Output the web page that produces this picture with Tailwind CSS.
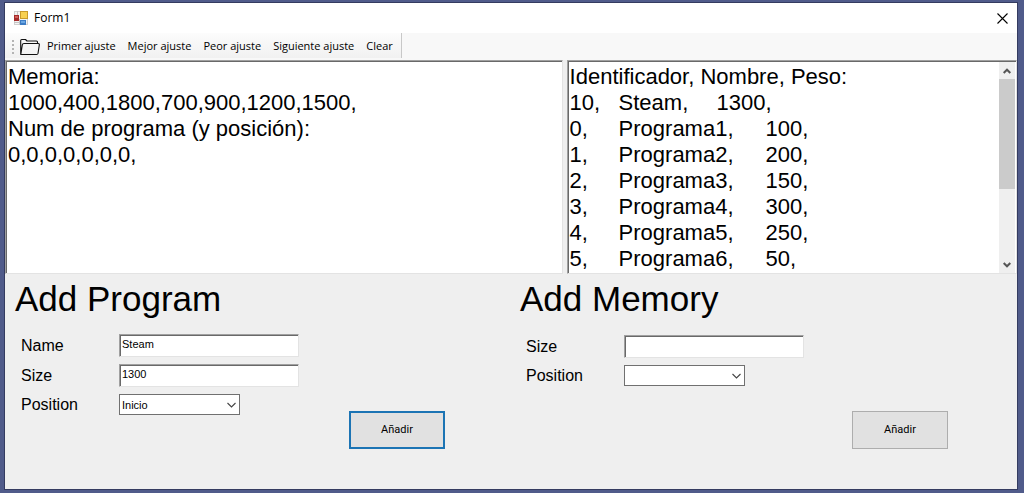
<!DOCTYPE html>
<html lang="es">
<head>
<meta charset="utf-8">
<meta name="viewport" content="width=device-width, initial-scale=1">
<title>Form1</title>
<script src="https://cdn.jsdelivr.net/npm/@tailwindcss/browser@4"></script>
</head>
<body class="flex min-h-screen bg-[#505b8a] pt-[2px] pr-[6px] pb-[3px] pl-[4px] font-['Liberation_Sans',Arial,sans-serif] text-black">
<main class="flex grow flex-col border border-[#343b60] bg-[#efefef]">
  <header class="flex h-[30px] items-center bg-white pr-[9px] pl-[9px] font-['Open_Sans',sans-serif] text-[12px]">
    <svg class="h-[14px] w-[14px]" viewBox="0 0 14 14" aria-hidden="true">
      <rect x="0.5" y="0.5" width="13" height="13" fill="#f4f4f4" stroke="#d0d0d0"/>
      <path d="M5.5 8v6M0 11.500h5M3.500 0v4" stroke="#c4c4c4"/>
      <rect x="6" y="0" width="8" height="8" fill="#c99a2a"/>
      <rect x="7" y="1" width="6" height="6" fill="#f8d050"/>
      <rect x="0" y="4" width="5" height="6" fill="#a52a2a"/>
      <rect x="1" y="5" width="3" height="2" fill="#d0605a"/>
      <rect x="6" y="9" width="6" height="5" fill="#3c7cc4"/>
      <rect x="7" y="10" width="4" height="2" fill="#6aa6e2"/>
    </svg>
    <h1 class="ml-[6px] grow">Form1</h1>
    <button type="button" aria-label="Close">
      <svg class="h-[11px] w-[11px]" viewBox="0 0 11 11" fill="none" stroke="#000" stroke-width="1.1"><path d="M.5.5l10 10M10.5.5l-10 10"/></svg>
    </button>
  </header>

  <nav class="flex h-[27px] items-start bg-[#f8f8f8] font-['Open_Sans',sans-serif] text-[11px]" aria-label="Acciones">
    <div class="flex h-[25px] items-center gap-[12px] border-r border-[#c8c8c8] bg-linear-to-b from-[#fcfcfc] to-[#f1f1f1] pt-[2px] pr-[8px] pl-[7px]">
      <div class="flex items-center gap-[6px]">
        <svg class="h-[14px] w-[2px]" viewBox="0 0 2 14" fill="#b4b4b4" aria-hidden="true"><path d="M0 0h2v2H0zM0 4h2v2H0zM0 8h2v2H0zM0 12h2v2H0z"/></svg>
        <button type="button" aria-label="Abrir">
          <svg class="h-[18px] w-[20px]" viewBox="0 0 20 18" fill="none" stroke="#111" stroke-width="1.1" stroke-linejoin="round"><path d="M.7 16.500V2.500Q.7 1.500 1.700 1.500H5.500L7 3H16.500Q17.500 3 17.500 4V5.500M.8 16.500L2.300 7Q2.500 5.500 4 5.500H18.300Q19.500 5.500 19.300 7L18 15.500Q17.800 16.500 16.500 16.500Z"/></svg>
        </button>
      </div>
      <button type="button" class="-ml-[5px]">Primer ajuste</button>
      <button type="button">Mejor ajuste</button>
      <button type="button">Peor ajuste</button>
      <button type="button">Siguiente ajuste</button>
      <button type="button">Clear</button>
    </div>
  </nav>

  <section class="flex h-[214px] gap-[4px]">
    <textarea readonly aria-label="Memoria" class="min-w-0 flex-[558_1_0%] resize-none overflow-hidden border border-t-[#a0a0a0] border-r-[#e3e3e3] border-b-[#e3e3e3] border-l-[#a0a0a0] bg-white pt-[3px] pl-[2px] text-[22px] leading-[26px] shadow-[inset_1px_1px_0_#696969] outline-none">Memoria:
1000,400,1800,700,900,1200,1500,
Num de programa (y posición):
0,0,0,0,0,0,0,</textarea>
    <div class="flex min-w-0 flex-[450_1_0%] border border-t-[#a0a0a0] border-r-[#e3e3e3] border-b-[#e3e3e3] border-l-[#a0a0a0] bg-white pt-px pr-px pl-px shadow-[inset_1px_1px_0_#696969]">
      <textarea readonly aria-label="Programas" class="min-w-0 grow resize-none overflow-hidden bg-white pt-[2px] pl-px text-[22px] leading-[26px] [tab-size:49px] outline-none">Identificador, Nombre, Peso:
10,	Steam,	1300,
0,	Programa1,	100,
1,	Programa2,	200,
2,	Programa3,	150,
3,	Programa4,	300,
4,	Programa5,	250,
5,	Programa6,	50,</textarea>
      <div class="flex w-[16px] flex-col bg-[#efefef]">
        <button type="button" aria-label="Subir" class="flex h-[17px] items-center justify-center"><svg class="h-[6px] w-[8px]" viewBox="0 0 8 6" fill="none" stroke="#555" stroke-width="2"><path d="M.7 5L4 1.700L7.300 5"/></svg></button>
        <div class="h-[110px] bg-[#cbcbcb]"></div>
        <div class="grow"></div>
        <button type="button" aria-label="Bajar" class="flex h-[17px] items-center justify-center"><svg class="h-[6px] w-[8px]" viewBox="0 0 8 6" fill="none" stroke="#555" stroke-width="2"><path d="M.7 1L4 4.300L7.300 1"/></svg></button>
      </div>
    </div>
  </section>

  <section class="grid grid-cols-2">
    <form class="pt-[5px] pl-[10px]">
      <h2 class="text-[35px] leading-[40px]">Add Program</h2>
      <div class="flex h-[130px] items-end gap-[50px] pl-[6px]">
        <div class="grid grid-cols-[98px_180px] items-center gap-y-[7px] self-start pt-[15px] text-[16px] leading-[20px]">
          <label for="p-name">Name</label>
          <input id="p-name" value="Steam" class="h-[23px] w-full border border-t-[#a0a0a0] border-r-[#e3e3e3] border-b-[#e3e3e3] border-l-[#a0a0a0] bg-white pb-[3px] pl-[2px] text-[11px] leading-[14px] shadow-[inset_1px_1px_0_#696969] outline-none">
          <label for="p-size">Size</label>
          <input id="p-size" value="1300" class="h-[23px] w-full border border-t-[#a0a0a0] border-r-[#e3e3e3] border-b-[#e3e3e3] border-l-[#a0a0a0] bg-white pb-[3px] pl-[2px] text-[11px] leading-[14px] shadow-[inset_1px_1px_0_#696969] outline-none">
          <label for="p-pos">Position</label>
          <div class="grid w-[121px] items-center">
            <select id="p-pos" class="col-start-1 row-start-1 h-[21px] appearance-none border border-[#707070] bg-white pl-[2px] text-[11px] leading-[14px] outline-none"><option>Inicio</option></select>
            <svg class="pointer-events-none col-start-1 row-start-1 mr-[4px] h-[6px] w-[9px] justify-self-end" viewBox="0 0 9 6" fill="none" stroke="#444" stroke-width="1.100"><path d="M.5 1L4.500 5L8.500 1"/></svg>
          </div>
        </div>
        <button type="button" class="h-[38px] w-[96px] border-2 border-[#1c74b4] bg-[#e1e1e1] font-['Roboto',sans-serif] text-[11px]">Añadir</button>
      </div>
    </form>
    <form class="pt-[5px] pl-[9px]">
      <h2 class="text-[35px] leading-[40px]">Add Memory</h2>
      <div class="flex h-[130px] items-end gap-[48px] pl-[6px]">
        <div class="grid grid-cols-[98px_180px] items-center gap-y-[7px] self-start pt-[16px] text-[16px] leading-[20px]">
          <label for="m-size">Size</label>
          <input id="m-size" class="h-[23px] w-full border border-t-[#a0a0a0] border-r-[#e3e3e3] border-b-[#e3e3e3] border-l-[#a0a0a0] bg-white pl-[2px] text-[11px] shadow-[inset_1px_1px_0_#696969] outline-none">
          <label for="m-pos">Position</label>
          <div class="grid w-[121px] items-center">
            <select id="m-pos" class="col-start-1 row-start-1 h-[21px] appearance-none border border-[#707070] bg-white pl-[2px] text-[11px] outline-none"><option></option></select>
            <svg class="pointer-events-none col-start-1 row-start-1 mr-[4px] h-[6px] w-[9px] justify-self-end" viewBox="0 0 9 6" fill="none" stroke="#444" stroke-width="1.100"><path d="M.5 1L4.500 5L8.500 1"/></svg>
          </div>
        </div>
        <button type="button" class="h-[38px] w-[96px] border border-[#adadad] bg-[#e1e1e1] font-['Roboto',sans-serif] text-[11px]">Añadir</button>
      </div>
    </form>
  </section>
</main>
</body>
</html>
